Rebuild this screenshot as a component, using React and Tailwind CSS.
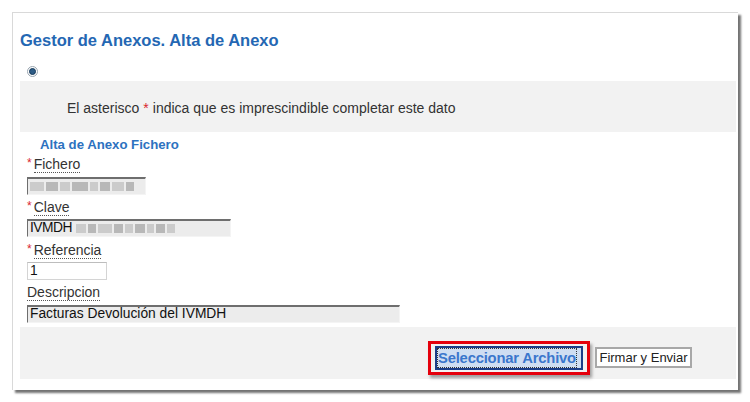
import React from "react";

const font = { fontFamily: '"Liberation Sans", Arial, sans-serif' };

const Label = ({ text, required }) => (
  <div className="flex items-center h-[17px] text-[14px] text-[#333]">
    {required ? <span className="text-[#d9262f] text-[12px] mr-[2px] -mt-[4px]">*</span> : null}
    <span className="border-b border-dotted border-[#555] leading-[15px]">{text}</span>
  </div>
);

const Blur = ({ widths }) => (
  <div className="flex items-center gap-[2px]">
    {widths.map((w, i) => (
      <span
        key={i}
        className={i % 2 === 0 ? "h-[9px] bg-[#cbcbcb]" : "h-[9px] bg-[#b8b8b8]"}
        style={{ width: w }}
      />
    ))}
  </div>
);

const Field = ({ width, white, children }) => (
  <div
    className={`flex items-center h-[18px] pl-[2px] text-[13.8px] text-[#111] overflow-hidden whitespace-nowrap ${
      white
        ? "bg-white border border-[#d4d4d4] border-t-[#bdbdbd]"
        : "bg-[#ececec] border-t-2 border-l border-[#6e6e6e] border-r border-r-[#f4f4f4] border-b border-b-[#f4f4f4]"
    }`}
    style={{ width }}
  >
    {children}
  </div>
);

export default function App() {
  return (
    <div className="w-[750px] h-[402px] bg-white pt-[12px] pl-[12px]" style={font}>
      <div className="w-[726px] h-[378px] border-l border-t border-[#d9d9d9] bg-white shadow-[3px_3px_2px_rgba(0,0,0,0.55)] pl-[7px] pr-[2px]">
        <div className="h-[20px] mt-[17px] flex items-center text-[16.5px] font-bold text-[#2467b3] whitespace-nowrap">
          Gestor de Anexos. Alta de Anexo
        </div>
        <div className="h-[31px] flex items-start pt-[16px] pl-[7px]">
          <span className="w-[11px] h-[11px] rounded-full border border-[#9aa6b0] bg-white flex items-center justify-center">
            <span className="w-[7px] h-[7px] rounded-full bg-[#2d5c86] border border-[#173a5a]" />
          </span>
        </div>
        <div className="h-[51px] bg-[#f2f2f2] flex items-center pt-[3px] pl-[47px] text-[14px] text-[#333] whitespace-nowrap">
          El asterisco<span className="text-[#d9262f] mx-[4px]">*</span>indica que es imprescindible completar este dato
        </div>
        <div className="h-[195px] pl-[7px] pt-[5px]">
          <div className="h-[16px] flex items-center pl-[13px] text-[13.2px] font-bold text-[#2d72c0] whitespace-nowrap">
            Alta de Anexo Fichero
          </div>
          <div className="mt-[3px]">
            <Label text="Fichero" required />
          </div>
          <div className="mt-[4px]">
            <Field width={119}>
              <Blur widths={[14, 12, 10, 16, 8, 10, 12, 8]} />
            </Field>
          </div>
          <div className="mt-[4px]">
            <Label text="Clave" required />
          </div>
          <div className="mt-[3px]">
            <Field width={204}>
              <span className="tracking-[-0.5px] mr-[4px]">IVMDH</span>
              <Blur widths={[10, 8, 14, 9, 8, 10, 7, 9, 8]} />
            </Field>
          </div>
          <div className="mt-[5px]">
            <Label text="Referencia" required />
          </div>
          <div className="mt-[3px]">
            <Field width={80} white>
              1
            </Field>
          </div>
          <div className="mt-[4px]">
            <Label text="Descripcion" />
          </div>
          <div className="mt-[4px]">
            <Field width={373}>Facturas Devolución del IVMDH</Field>
          </div>
        </div>
        <div className="h-[52px] bg-[#f2f2f2] flex items-start pl-[408px]">
          <div className="mt-[14px] border-[3px] border-[#e5000c] px-[4px] py-[2px] shadow-[2px_3px_3px_rgba(0,0,0,0.35)]">
            <div className="w-[148px] h-[24px] border-2 border-[#1b3d88] bg-[#cfdef2] flex items-center px-[1px] overflow-hidden">
              <span className="whitespace-nowrap outline outline-1 outline-dotted outline-[#333] text-[14.8px] tracking-[-0.2px] font-bold text-[#3a76cc] leading-[18px]">
                Seleccionar Archivo
              </span>
            </div>
          </div>
          <div className="ml-[5px] mt-[20px] h-[21px] w-[97px] border-2 border-[#a8a8a8] bg-white flex items-center justify-center text-[13px] text-[#222] whitespace-nowrap">
            Firmar y Enviar
          </div>
        </div>
      </div>
    </div>
  );
}
